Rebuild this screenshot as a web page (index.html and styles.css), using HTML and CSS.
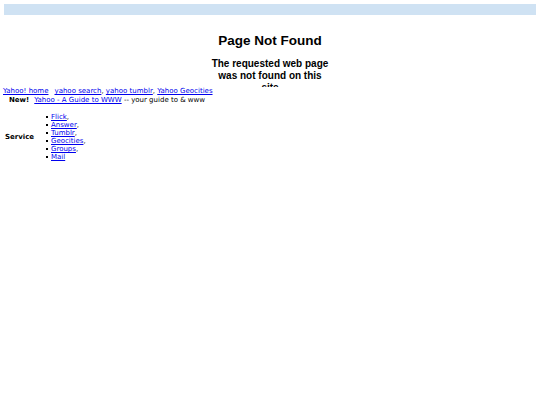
FILE: index.html
```html
<!DOCTYPE html>
<html>
<head>
<meta charset="utf-8">
<title>Page Not Found</title>
<link rel="stylesheet" href="styles.css">
</head>
<body>
<div class="topbar"></div>
<h1 class="title">Page Not Found</h1>
<div class="subtitle-box">
  <h2 class="subtitle">The requested web page was not found on this site</h2>
</div>
<div class="nav"><a href="#">Yahoo! home</a><span class="gap"></span><a href="#">yahoo search</a>, <a href="#">yahoo tumblr</a>, <a href="#">Yahoo Geocities</a></div>
<div class="newline"><b class="new">New!</b><a href="#">Yahoo - A Guide to WWW</a> -- your guide to &amp; www</div>
<div class="service">
  <b class="service-label">Service</b>
  <ul class="service-list">
    <li><a href="#">Flick</a>,</li>
    <li><a href="#">Answer</a>,</li>
    <li><a href="#">Tumblr</a>,</li>
    <li><a href="#">Geocities</a>,</li>
    <li><a href="#">Groups</a>,</li>
    <li><a href="#">Mail</a></li>
  </ul>
</div>
</body>
</html>
```
FILE: styles.css
```css
html, body {
  margin: 0;
  padding: 0;
  background: #ffffff;
  font-family: "DejaVu Sans", Verdana, sans-serif;
  font-size: 7px;
  color: #000;
}
a { color: #0000ee; }
.topbar {
  margin: 4px 4px 0 4px;
  height: 11px;
  background: #cfe2f3;
}
.title {
  font-family: "Liberation Sans", Arial, sans-serif;
  font-size: 13.5px;
  font-weight: bold;
  text-align: center;
  margin: 18px 0 0 0;
  line-height: 16px;
}
.subtitle-box {
  width: 119px;
  height: 29px;
  margin: 9px auto 0 auto;
  overflow: hidden;
}
.subtitle {
  font-family: "Liberation Sans", Arial, sans-serif;
  font-size: 10px;
  font-weight: bold;
  text-align: center;
  line-height: 12px;
  margin: 0;
}
.nav {
  margin: 0 0 0 3px;
  line-height: 9px;
}
.gap { display: inline-block; width: 6px; }
.newline {
  margin: 0 0 0 9px;
  line-height: 9px;
}
.new { margin-right: 5px; }
.service {
  display: flex;
  align-items: center;
  margin-top: 8px;
}
.service-label {
  width: 51px;
  padding-left: 5px;
  box-sizing: border-box;
}
.service-list {
  margin: 0;
  padding: 0;
  list-style: none;
  line-height: 8px;
}
.service-list li {
  position: relative;
}
.service-list li::before {
  content: "";
  position: absolute;
  left: -5px;
  top: 3px;
  width: 2px;
  height: 2px;
  background: #000;
}
```
